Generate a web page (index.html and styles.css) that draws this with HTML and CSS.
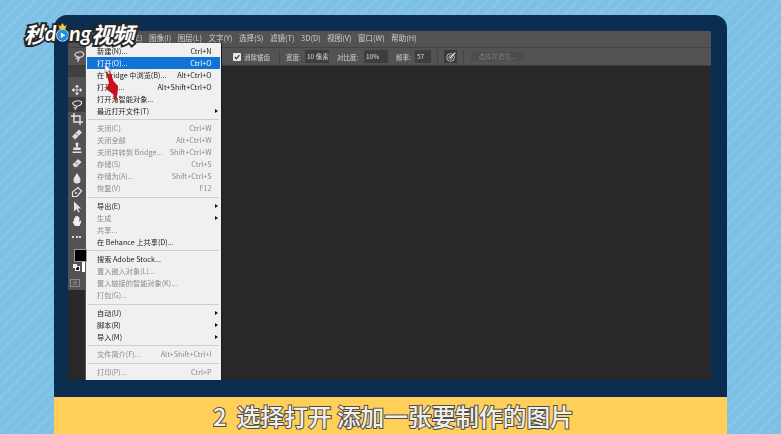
FILE: index.html
```html
<!DOCTYPE html>
<html lang="zh">
<head>
<meta charset="utf-8">
<title>选择打开</title>
<link rel="stylesheet" href="styles.css">
</head>
<body>
<div class="stage">
  <div class="logo">
    <span>秒</span><span class="latin">d</span><span class="play"><svg viewBox="0 0 16 24" width="13" height="20"><path d="M3 3l2.500 2L8 1l2.500 4L13 3l-1.500 6h-7z" fill="#f6c928" stroke="#222" stroke-width=".8"/><circle cx="8" cy="16" r="7" fill="#1e8fe8" stroke="#fff" stroke-width="1.500"/><path d="M6 12.500v7l5.500-3.500z" fill="#fff"/></svg></span><span class="latin">ng</span><span>视频</span>
  </div>
  <div class="monitor">
    <div class="screen">
      <div class="menubar">
        <span>编辑(E)</span><span>图像(I)</span><span>图层(L)</span><span>文字(Y)</span><span>选择(S)</span><span>滤镜(T)</span><span>3D(D)</span><span>视图(V)</span><span>窗口(W)</span><span>帮助(H)</span>
      </div>
      <div class="options">
        <svg class="opt-tool" viewBox="0 0 14 14" width="13" height="13"><path d="M2 5c1-3 7-4 9-2s-1 5-4 5-4-1-5-3zM7 8l-2 5M3 9l3 1" fill="none" stroke="#ddd" stroke-width="1.200"/></svg>
        <svg class="check" viewBox="0 0 8 8" width="8" height="8"><rect width="8" height="8" rx="1" fill="#e6e6e6"/><path d="M1.800 4l1.700 1.800L6.300 2.200" fill="none" stroke="#333" stroke-width="1.200"/></svg>
        <span class="opt-label l-aa">消除锯齿</span>
        <i class="opt-sep"></i>
        <span class="opt-label l-2">宽度:</span><span class="field f-w">10 像素</span>
        <span class="opt-label l-3">对比度:</span><span class="field f-w">10%</span>
        <span class="opt-label l-2">频率:</span><span class="field f-n">57</span>
        <i class="opt-sep"></i>
        <span class="pen-btn"><svg viewBox="0 0 14 14" width="12" height="12"><circle cx="6.500" cy="7.500" r="4.500" fill="none" stroke="#ccc"/><circle cx="6.500" cy="7.500" r="2" fill="none" stroke="#ccc"/><path d="M6 8l6-6" stroke="#eee" stroke-width="1.300"/></svg></span>
        <i class="opt-sep sep-mask"></i>
        <span class="mask-btn">选择并遮住...</span>
      </div>
      <div class="workspace">
        <div class="toolcol">
          <div class="tool-head"></div>
          <div class="tools">
            <div class="tool"><svg viewBox="0 0 12 12"><path d="M6 1v10M1 6h10M6 1L4.500 3h3zM6 11l-1.500-2h3zM1 6l2-1.500v3zM11 6L9 4.500v3z" fill="#ddd" stroke="#ddd" stroke-width=".8"/></svg></div>
            <div class="tool selected"><svg viewBox="0 0 12 12"><path d="M1.500 4.500C2.500 2 8 1 10 2.500S9 7 6 7 2.500 6 1.500 4.500zM6 7L4 11M2.500 8.500l3 1" fill="none" stroke="#e4e4e4" stroke-width="1.100"/></svg></div>
            <div class="tool"><svg viewBox="0 0 12 12"><path d="M3 0v9h9M0 3h9v9" fill="none" stroke="#e4e4e4" stroke-width="1.400"/></svg></div>
            <div class="tool"><svg viewBox="0 0 12 12"><path d="M1 8.500L8 1.500l3 3-7 7z" fill="#ddd"/><path d="M5 5.500l2 2" stroke="#666"/></svg></div>
            <div class="tool"><svg viewBox="0 0 12 12"><path d="M4.500 1.500a1.600 1.600 0 013 0c0 1.500-.8 2-.8 4h3v2.500h-7.400V5.500h3c0-2-.8-2.500-.8-4zM1.500 9.500h9v1.500h-9z" fill="#e4e4e4"/></svg></div>
            <div class="tool"><svg viewBox="0 0 12 12"><path d="M1.500 7.500L7 2l3.500 3L6 10H3.500z" fill="#ddd"/><path d="M4 5l3.500 3M1 11h10" stroke="#666" stroke-width=".8"/></svg></div>
            <div class="tool"><svg viewBox="0 0 12 12"><path d="M6 1C7.500 4 9.500 5.500 9.500 8a3.500 3.500 0 01-7 0C2.500 5.500 4.500 4 6 1z" fill="#e4e4e4"/></svg></div>
            <div class="tool"><svg viewBox="0 0 12 12"><path d="M7 1.500l3.500 3.500L6 10.500H1.500V6z" fill="none" stroke="#e4e4e4" stroke-width="1.200"/><circle cx="5" cy="7" r="1" fill="#e4e4e4"/></svg></div>
            <div class="tool"><svg viewBox="0 0 12 12"><path d="M3 .5v10l2.500-2.500 2 3.500 1.300-.8-2-3.300h3.400z" fill="#e4e4e4"/></svg></div>
            <div class="tool"><svg viewBox="0 0 12 12"><path d="M3 6.500V3.200a.7.7 0 011.300 0V6V1.800a.7.7 0 011.400 0V6V1.500a.7.7 0 011.400 0V6V2.200a.7.7 0 011.300 0V7l1-1.200c.6-.6 1.300 0 .9.700L8.500 11H4L1.800 7.600c-.5-1 .7-1.700 1.200-1.100z" fill="#eee"/></svg></div>
            <div class="tool dots"><i></i><i></i><i></i></div>
          </div>
          <div class="swatches">
            <span class="fg"></span>
            <span class="swap"><i class="sw-bk"></i><i class="sw-wt"></i></span>
            <span class="bg"></span>
          </div>
          <div class="mask-mode"><i></i></div>
        </div>
        <div class="canvas"></div>
      </div>

      <div class="menu">
        <div class="row"><span>新建(N)...</span><span>Ctrl+N</span></div>
        <div class="row active"><span>打开(O)...</span><span>Ctrl+O</span></div>
        <div class="row"><span>在 Bridge 中浏览(B)...</span><span>Alt+Ctrl+O</span></div>
        <div class="row"><span>打开为...</span><span>Alt+Shift+Ctrl+O</span></div>
        <div class="row"><span>打开为智能对象...</span></div>
        <div class="row"><span>最近打开文件(T)</span><i class="sub"></i></div>
        <hr class="sep">
        <div class="row off"><span>关闭(C)</span><span>Ctrl+W</span></div>
        <div class="row off"><span>关闭全部</span><span>Alt+Ctrl+W</span></div>
        <div class="row off"><span>关闭并转到 Bridge...</span><span>Shift+Ctrl+W</span></div>
        <div class="row off"><span>存储(S)</span><span>Ctrl+S</span></div>
        <div class="row off"><span>存储为(A)...</span><span>Shift+Ctrl+S</span></div>
        <div class="row off"><span>恢复(V)</span><span>F12</span></div>
        <hr class="sep">
        <div class="row"><span>导出(E)</span><i class="sub"></i></div>
        <div class="row off"><span>生成</span><i class="sub"></i></div>
        <div class="row off"><span>共享...</span></div>
        <div class="row"><span>在 Behance 上共享(D)...</span></div>
        <hr class="sep">
        <div class="row"><span>搜索 Adobe Stock...</span></div>
        <div class="row off"><span>置入嵌入对象(L)...</span></div>
        <div class="row off"><span>置入链接的智能对象(K)...</span></div>
        <div class="row off"><span>打包(G)...</span></div>
        <hr class="sep">
        <div class="row"><span>自动(U)</span><i class="sub"></i></div>
        <div class="row"><span>脚本(R)</span><i class="sub"></i></div>
        <div class="row"><span>导入(M)</span><i class="sub"></i></div>
        <hr class="sep">
        <div class="row off"><span>文件简介(F)...</span><span>Alt+Shift+Ctrl+I</span></div>
        <hr class="sep">
        <div class="row off"><span>打印(P)...</span><span>Ctrl+P</span></div>
      </div>

      <svg class="pointer" viewBox="0 0 24 48" width="24" height="48">
        <path d="M6 12L10 11 13.500 21 18 26 17.500 33 16 44 13 34 6 29 9 23z" fill="#c8101c"/>
        <path d="M5 4v9l2-1.800 1.500 3 1.400-.7-1.400-2.900h2.800z" fill="#f4f4f4" stroke="#777" stroke-width=".5"/>
      </svg>
    </div>
  </div>
  <div class="caption"><span class="step">2</span> 选择打开 添加一张要制作的图片</div>
</div>
</body>
</html>
```

FILE: styles.css
```css
* { box-sizing: border-box; }
html, body { margin: 0; padding: 0; }
body { width: 781px; height: 434px; overflow: hidden; }

.stage {
  position: relative;
  width: 781px;
  height: 434px;
  padding: 15px 54px 0;
  background-color: #7fc2e8;
  background-image: repeating-linear-gradient(135deg, rgba(255,255,255,.035) 0 3px, rgba(0,0,0,.012) 3px 8px);
  font-family: "Noto Sans CJK SC", "Liberation Sans", sans-serif;
}

/* monitor */
.monitor {
  height: 382px;
  padding: 16px 16px 17px 14px;
  background: #0b2d50;
  border-radius: 13px 13px 0 0;
}
.screen {
  position: relative;
  display: flex;
  flex-direction: column;
  height: 349px;
  background: #282828;
  filter: blur(.3px);
}

/* caption */
.caption {
  height: 37px;
  background: #ffcf57;
  padding: 4px 0 0 159px;
  font-size: 23.700px;
  line-height: 30px;
  font-weight: 500;
  color: #f3f0ea;
  -webkit-text-stroke: 2px #4c4c4c;
  paint-order: stroke fill;
  white-space: pre;
}
.step { margin-right: 5px; }

/* logo */
.logo {
  position: absolute;
  left: 24px;
  top: 15px;
  z-index: 5;
  display: flex;
  align-items: flex-end;
  height: 32px;
  font-size: 22px;
  line-height: 28px;
  font-weight: 700;
  font-style: italic;
  color: #fff;
  -webkit-text-stroke: 4px #262626;
  paint-order: stroke fill;
  letter-spacing: -1px;
}
.logo .latin { font-family: "Lato", sans-serif; font-size: 21px; font-weight: 700; letter-spacing: 0; -webkit-text-stroke-width: 3.500px; }
.play { display: block; margin: 0 0 5px; height: 20px; }
.play svg { display: block; }

/* menu bar */
.menubar {
  display: flex;
  gap: 6.500px;
  height: 17px;
  padding: 0 0 0 50px;
  background: #535353;
  border-bottom: 1px solid #434343;
  font-size: 7.500px;
  line-height: 14px;
  color: #d0d0d0;
  white-space: nowrap;
}

/* options bar */
.options {
  display: flex;
  align-items: center;
  height: 18px;
  padding-left: 5px;
  background: #535353;
  border-bottom: 1px solid #3c3c3c;
  font-size: 6.500px;
  color: #d0d0d0;
  white-space: nowrap;
}
.opt-tool { margin-right: 147px; }
.check { margin-right: 3px; }
.opt-label { display: block; margin-right: 3px; }
.l-aa { width: 26px; margin-right: 0; }
.l-2 { width: 16px; }
.l-3 { width: 24px; }
.opt-sep { width: 1px; height: 14px; margin: 0 6px 0 9px; background: #444; }
.field + .opt-sep { margin-left: 6px; }
.sep-mask { margin: 0 7px 0 6px; }
.field { height: 13px; margin-right: 8px; padding-left: 2px; line-height: 13px; background: #3e3e3e; color: #ddd; }
.f-w { width: 24px; }
.f-n { width: 16px; margin-right: 0; }
.pen-btn { display: flex; align-items: center; justify-content: center; width: 13px; height: 13px; background: #3a3a3a; }
.mask-btn { width: 53px; height: 9px; line-height: 9px; text-align: center; background: #4c4c4c; color: #7c7c7c; }

/* workspace */
.workspace { display: flex; flex: 1; min-height: 0; }
.canvas { flex: 1; background: #282828; }
.toolcol {
  display: flex;
  flex-direction: column;
  width: 17px;
  height: 224px;
  background: #535353;
}
.tool-head { height: 11px; background: #404040; }
.tools { display: flex; flex-direction: column; padding-top: 5.700px; }
.tool { display: flex; align-items: center; justify-content: center; height: 14.600px; }
.tool svg { width: 12px; height: 12px; display: block; }
.tool.selected { background: #3c3c3c; }
.dots { gap: 1.500px; padding-top: 2px; }
.dots i { width: 2px; height: 2px; background: #ddd; }

.swatches { position: relative; height: 30px; margin-top: 5.700px; flex-shrink: 0; }
.fg { position: absolute; left: 6px; top: 0; z-index: 1; width: 13px; height: 13px; background: #000; border: 1px solid #999; }
.bg { position: absolute; left: 14px; top: 13px; width: 4px; height: 10px; background: #fff; }
.swap { position: absolute; left: 5px; top: 15px; width: 7px; height: 7px; }
.sw-bk { position: absolute; left: 2px; top: 2px; width: 5px; height: 5px; background: #111; border: 1px solid #eee; }
.sw-wt { position: absolute; left: 0; top: 0; width: 4px; height: 4px; background: #eee; }
.mask-mode { display: flex; align-items: center; justify-content: center; width: 10px; height: 8px; margin-left: 2px; border: 1px solid #8a8a8a; }
.mask-mode i { width: 4px; height: 4px; border-radius: 50%; border: 1px solid #8a8a8a; }

/* file menu */
.menu {
  position: absolute;
  left: 17px;
  top: 12px;
  width: 137px;
  height: 337px;
  padding: 1.500px 1px 0;
  overflow: hidden;
  background: #f0f0f0;
  border-left: 1px solid #555;
  border-right: 1px solid #1a1a1a;
  font-size: 7.200px;
  color: #1c1c1c;
}
.row {
  display: flex;
  align-items: center;
  justify-content: space-between;
  height: 12px;
  padding: 0 8.500px 0 10px;
  line-height: 12px;
  white-space: nowrap;
}
.row.active { background: #0f74d6; color: #fff; }
.row.off { color: #8b8b8b; }
.sep { height: 1px; margin: 2.500px 1px 2px; border: 0; background: #cfcfcf; }
.sub {
  width: 0;
  height: 0;
  margin-right: -6px;
  border-left: 3px solid #111;
  border-top: 2.500px solid transparent;
  border-bottom: 2.500px solid transparent;
}

/* red arrow + cursor */
.pointer { position: absolute; left: 32px; top: 29px; }
```
